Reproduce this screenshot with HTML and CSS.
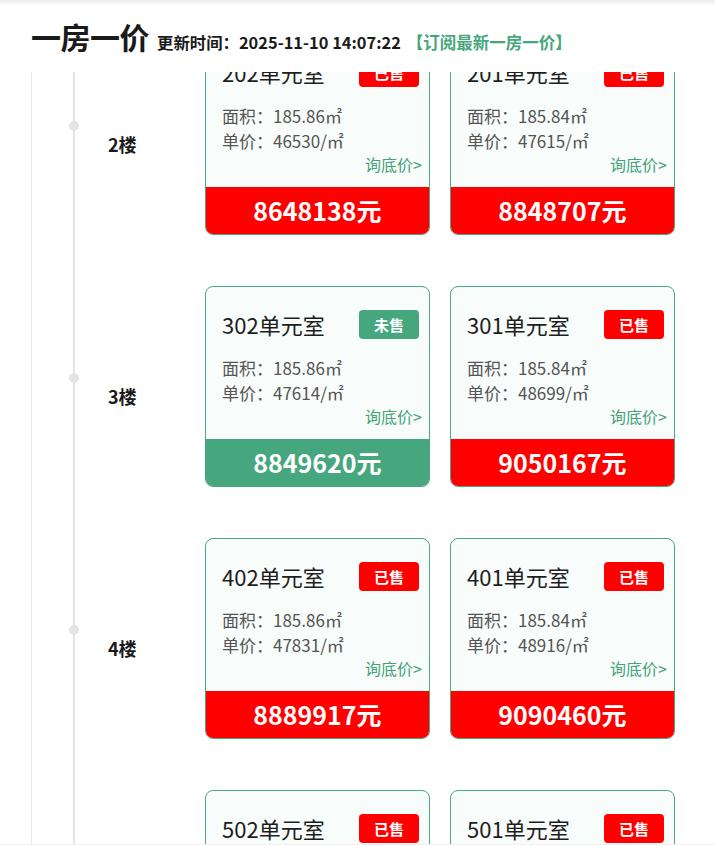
FILE: index.html
```html
<!DOCTYPE html>
<html lang="zh-CN">
<head>
<meta charset="utf-8">
<title>一房一价</title>
<link rel="stylesheet" href="styles.css">
</head>
<body>
<div class="page">
  <header class="header">
    <h1 class="title">一房一价</h1>
    <span class="update">更新时间：2025-11-10 14:07:22</span>
    <a class="subscribe">【订阅最新一房一价】</a>
  </header>
  <main class="viewport">
    <div class="rail">
      <div class="timeline">

        <section class="floor-row">
          <div class="floor"><span class="dot"></span>2楼</div>
          <div class="cards">
            <div class="card sold">
              <div class="card-head"><span class="room">202单元室</span><span class="badge">已售</span></div>
              <div class="info">面积：185.86㎡</div>
              <div class="info">单价：46530/㎡</div>
              <div class="ask">询底价&gt;</div>
              <div class="price">8648138元</div>
            </div>
            <div class="card sold">
              <div class="card-head"><span class="room">201单元室</span><span class="badge">已售</span></div>
              <div class="info">面积：185.84㎡</div>
              <div class="info">单价：47615/㎡</div>
              <div class="ask">询底价&gt;</div>
              <div class="price">8848707元</div>
            </div>
          </div>
        </section>

        <section class="floor-row">
          <div class="floor"><span class="dot"></span>3楼</div>
          <div class="cards">
            <div class="card unsold">
              <div class="card-head"><span class="room">302单元室</span><span class="badge">未售</span></div>
              <div class="info">面积：185.86㎡</div>
              <div class="info">单价：47614/㎡</div>
              <div class="ask">询底价&gt;</div>
              <div class="price">8849620元</div>
            </div>
            <div class="card sold">
              <div class="card-head"><span class="room">301单元室</span><span class="badge">已售</span></div>
              <div class="info">面积：185.84㎡</div>
              <div class="info">单价：48699/㎡</div>
              <div class="ask">询底价&gt;</div>
              <div class="price">9050167元</div>
            </div>
          </div>
        </section>

        <section class="floor-row">
          <div class="floor"><span class="dot"></span>4楼</div>
          <div class="cards">
            <div class="card sold">
              <div class="card-head"><span class="room">402单元室</span><span class="badge">已售</span></div>
              <div class="info">面积：185.86㎡</div>
              <div class="info">单价：47831/㎡</div>
              <div class="ask">询底价&gt;</div>
              <div class="price">8889917元</div>
            </div>
            <div class="card sold">
              <div class="card-head"><span class="room">401单元室</span><span class="badge">已售</span></div>
              <div class="info">面积：185.84㎡</div>
              <div class="info">单价：48916/㎡</div>
              <div class="ask">询底价&gt;</div>
              <div class="price">9090460元</div>
            </div>
          </div>
        </section>

        <section class="floor-row">
          <div class="floor"><span class="dot"></span>5楼</div>
          <div class="cards">
            <div class="card sold">
              <div class="card-head"><span class="room">502单元室</span><span class="badge">已售</span></div>
              <div class="info">面积：185.86㎡</div>
              <div class="info">单价：48048/㎡</div>
              <div class="ask">询底价&gt;</div>
              <div class="price">8930229元</div>
            </div>
            <div class="card sold">
              <div class="card-head"><span class="room">501单元室</span><span class="badge">已售</span></div>
              <div class="info">面积：185.84㎡</div>
              <div class="info">单价：49133/㎡</div>
              <div class="ask">询底价&gt;</div>
              <div class="price">9130858元</div>
            </div>
          </div>
        </section>

      </div>
    </div>
  </main>
</div>
</body>
</html>
```

FILE: styles.css
```css
* { box-sizing: border-box; }
html, body { margin: 0; padding: 0; background: #fff; }
body {
  font-family: "Noto Sans CJK SC", "Noto Sans", sans-serif;
  color: #222;
  width: 715px;
  height: 845px;
  overflow: hidden;
}
.page {
  display: flex;
  flex-direction: column;
  height: 845px;
  background: linear-gradient(#ececec, #fff 6px);
}
.header {
  height: 72px;
  flex: none;
  display: flex;
  align-items: baseline;
  padding: 14px 0 0 31px;
}
.title {
  margin: 0;
  font-size: 30px;
  font-weight: 700;
  color: #1a1a1a;
  line-height: 44px;
  letter-spacing: -0.5px;
}
.update {
  margin-left: 8px;
  font-size: 16.4px;
  font-weight: 700;
  color: #1a1a1a;
}
.subscribe {
  margin-left: 6px;
  font-size: 16.5px;
  font-weight: 700;
  color: #46a67c;
}
.viewport {
  flex: 1;
  overflow: hidden;
  border-bottom: 1px solid #eeeeee;
}
.rail {
  margin-left: 31px;
  height: 100%;
  border-left: 1px solid #e8e8e8;
}
.timeline {
  margin-left: 41px;
  height: 100%;
  border-left: 2px solid #e4e4e4;
  display: flex;
  flex-direction: column;
  gap: 51px;
}
.floor-row {
  display: flex;
  align-items: center;
  flex: none;
}
.floor-row:first-child { margin-top: -38px; }
.floor {
  position: relative;
  width: 130px;
  padding: 18px 0 0 33px;
  font-size: 18px;
  font-weight: 700;
  line-height: 18px;
  color: #1a1a1a;
}
.dot {
  position: absolute;
  left: -6px;
  top: 4px;
  width: 10px;
  height: 10px;
  border-radius: 50%;
  background: #e4e4e4;
}
.cards {
  display: grid;
  grid-template-columns: 225px 225px;
  gap: 20px;
}
.card {
  height: 201px;
  border: 1px solid #4aa981;
  border-radius: 8px;
  background: #f8fcfa;
  overflow: hidden;
  display: flex;
  flex-direction: column;
}
.card-head {
  display: flex;
  align-items: center;
  justify-content: space-between;
  margin-top: 23px;
  padding: 0 10px 0 16px;
  height: 29px;
}
.room {
  font-size: 22px;
  color: #1e1e1e;
  line-height: 29px;
}
.badge {
  width: 60px;
  height: 29px;
  border-radius: 4px;
  color: #fff;
  font-size: 15px;
  font-weight: 700;
  line-height: 29px;
  text-align: center;
}
.sold .badge, .sold .price { background: #ff0000; }
.unsold .badge, .unsold .price { background: #46a77e; }
.info {
  padding-left: 16px;
  font-size: 17px;
  line-height: 25px;
  color: #555;
}
.card-head + .info { margin-top: 16px; }
.ask {
  text-align: right;
  padding-right: 7px;
  font-size: 16px;
  line-height: 22px;
  color: #46a27a;
}
.price {
  margin-top: auto;
  height: 47px;
  color: #fff;
  font-size: 25px;
  font-weight: 700;
  line-height: 47px;
  text-align: center;
}
```
